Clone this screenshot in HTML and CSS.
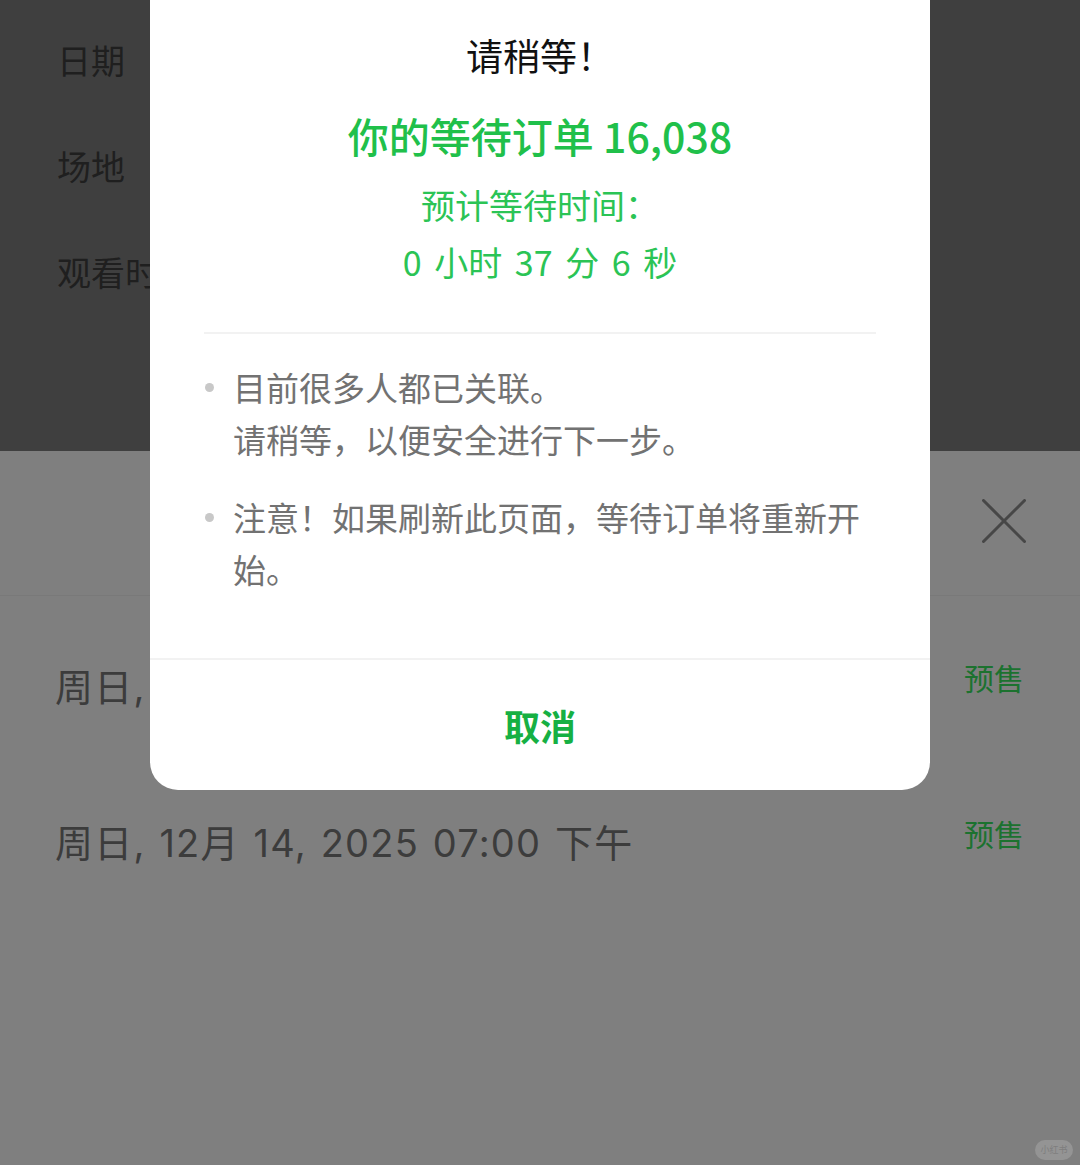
FILE: index.html
```html
<!DOCTYPE html>
<html lang="zh-CN">
<head>
<meta charset="utf-8">
<title>请稍等！</title>
<link rel="stylesheet" href="styles.css">
</head>
<body>
<div class="page">
  <div class="label">日期</div>
  <div class="label">场地</div>
  <div class="label">观看时间</div>
</div>
<div class="mask"></div>
<div class="sheet">
  <div class="sheet-head">
    <svg class="close" width="44" height="44" viewBox="0 0 44 44" fill="none" stroke="#8e8e8e" stroke-width="3" stroke-linecap="round">
      <path d="M1.5 1.5 L42.5 42.5 M42.5 1.5 L1.5 42.5"/>
    </svg>
  </div>
  <div class="row">
    <div class="date">周日, 12月 14, 2025 07:00 下午</div>
    <div class="sale">预售</div>
  </div>
  <div class="row">
    <div class="date">周日, 12月 14, 2025 07:00 下午</div>
    <div class="sale">预售</div>
  </div>
</div>
<div class="mask"></div>
<div class="modal">
  <div class="modal-body">
    <div class="title">请稍等！</div>
    <div class="order">你的等待订单 16,038</div>
    <div class="eta">预计等待时间：<br>0 小时 37 分 6 秒</div>
    <div class="divider"></div>
    <ul class="notes">
      <li>目前很多人都已关联。<br>请稍等，以便安全进行下一步。</li>
      <li>注意！如果刷新此页面，等待订单将重新开始。</li>
    </ul>
  </div>
  <div class="modal-foot">取消</div>
</div>
<div class="watermark">小红书</div>
</body>
</html>
```
FILE: styles.css
```css
html, body {
  margin: 0;
  padding: 0;
}
body {
  width: 1080px;
  height: 1165px;
  overflow: hidden;
  position: relative;
  background: #fff;
  font-family: "Noto Sans CJK SC", "Noto Sans", sans-serif;
}
.page {
  padding: 7px 0 0 57px;
}
.label {
  height: 106px;
  line-height: 106px;
  font-size: 34px;
  color: #7c7c7c;
}
.mask {
  position: absolute;
  inset: 0;
  background: rgba(0, 0, 0, 0.5);
}
.sheet {
  position: absolute;
  left: 0;
  right: 0;
  top: 451px;
  bottom: 0;
  background: #fff;
}
.sheet-head {
  height: 144px;
  border-bottom: 1px solid #f2f2f2;
  display: flex;
  align-items: center;
  justify-content: flex-end;
  padding-right: 54px;
}
.close {
  display: block;
  margin-top: -4px;
}
.row {
  height: 156px;
  box-sizing: border-box;
  padding: 61px 56px 0 55px;
  display: flex;
  justify-content: space-between;
  align-items: flex-start;
}
.date {
  margin-top: 5px;
  line-height: 50px;
  font-family: "Inter", "Noto Sans CJK SC", sans-serif;
  font-size: 38px;
  letter-spacing: 1.2px;
  word-spacing: 2px;
  color: #787878;
}
.sale {
  line-height: 40px;
  font-size: 30px;
  color: #38e45e;
}
.modal {
  position: absolute;
  left: 150px;
  top: 0;
  width: 780px;
  height: 790px;
  background: #fff;
  border-radius: 0 0 28px 28px;
  display: flex;
  flex-direction: column;
}
.modal-body {
  padding: 30px 54px 0;
  text-align: center;
}
.title {
  line-height: 50px;
  font-size: 37px;
  color: #111;
}
.order {
  margin-top: 27px;
  line-height: 56px;
  font-size: 41px;
  font-weight: 500;
  color: #20c04a;
}
.eta {
  margin-top: 13px;
  line-height: 57px;
  font-size: 34px;
  word-spacing: 5px;
  color: #2bc455;
}
.divider {
  margin-top: 42px;
  height: 2px;
  background: #f2f2f2;
}
.notes {
  list-style: none;
  margin: 27px 0 0;
  padding: 0;
  text-align: left;
}
.notes li {
  position: relative;
  padding-left: 29px;
  line-height: 52px;
  font-size: 33px;
  color: #727272;
}
.notes li + li {
  margin-top: 26px;
}
.notes li::before {
  content: "";
  position: absolute;
  left: 1px;
  top: 22px;
  width: 9px;
  height: 9px;
  border-radius: 50%;
  background: #c8c8c8;
}
.modal-foot {
  margin-top: auto;
  height: 130px;
  border-top: 2px solid #f2f2f2;
  display: flex;
  align-items: center;
  justify-content: center;
  font-size: 36px;
  font-weight: 700;
  color: #16b043;
}
.watermark {
  position: absolute;
  left: 1035px;
  top: 1140px;
  width: 38px;
  height: 20px;
  border-radius: 10px;
  background: #949494;
  color: #7e7e7e;
  font-size: 9px;
  line-height: 20px;
  text-align: center;
}
```
